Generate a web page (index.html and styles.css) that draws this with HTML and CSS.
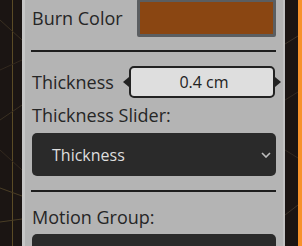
FILE: index.html
```html
<!DOCTYPE html>
<html>
<head>
<meta charset="utf-8">
<link rel="stylesheet" href="styles.css">
</head>
<body>
<div class="app">
  <svg class="scene" width="302" height="246" viewBox="0 0 302 246">
    <line x1="12.5" y1="0" x2="12.5" y2="246" stroke="#5a4b26" stroke-width="1"/>
    <line x1="0" y1="20" x2="22" y2="40" stroke="#3a3022" stroke-width="1"/>
    <line x1="0" y1="70" x2="22" y2="60" stroke="#33291f" stroke-width="1"/>
    <line x1="0" y1="120" x2="22" y2="105" stroke="#3a3022" stroke-width="1"/>
    <line x1="0" y1="150" x2="22" y2="170" stroke="#33291f" stroke-width="1"/>
    <line x1="0" y1="188" x2="22" y2="196" stroke="#4a3e26" stroke-width="1"/>
    <line x1="0" y1="222" x2="22" y2="219" stroke="#4a3e26" stroke-width="1"/>
    <line x1="285" y1="44" x2="298" y2="36" stroke="#3e342a" stroke-width="1"/>
    <line x1="285" y1="100" x2="298" y2="92" stroke="#332a22" stroke-width="1"/>
    <line x1="285" y1="150" x2="298" y2="158" stroke="#332a22" stroke-width="1"/>
    <line x1="285" y1="215" x2="298" y2="205" stroke="#3e342a" stroke-width="1"/>
  </svg>
  <div class="side-left"></div>
  <div class="panel">
    <div class="row color-row">
      <span class="label">Burn Color</span>
      <div class="swatch"></div>
    </div>
    <div class="rule"></div>
    <div class="row thick-row">
      <span class="label">Thickness</span>
      <div class="spin">
        <span class="nub nub-left"></span>
        <span class="spin-value">0.4 cm</span>
        <span class="nub nub-right"></span>
      </div>
    </div>
    <div class="label block-label">Thickness Slider:</div>
    <div class="select">
      <span>Thickness</span>
      <svg class="chev" width="10" height="6" viewBox="0 0 10 6"><path d="M1 1 L5 5 L9 1" fill="none" stroke="#bdbdbd" stroke-width="1.6"/></svg>
    </div>
    <div class="rule rule2"></div>
    <div class="label block-label motion">Motion Group:</div>
    <div class="select"></div>
  </div>
  <div class="side-right"></div>
  <div class="accent"></div>
</div>
</body>
</html>
```
FILE: styles.css
```css
html, body {
  margin: 0;
  padding: 0;
}
body {
  width: 302px;
  height: 246px;
  overflow: hidden;
  background: #1b1513;
  font-family: "Open Sans", "Noto Sans", sans-serif;
}
.app {
  position: relative;
  display: flex;
  height: 246px;
}
.scene {
  position: absolute;
  left: 0;
  top: 0;
}
.side-left {
  width: 22px;
  flex: none;
}
.panel {
  position: relative;
  flex: none;
  background: #b4b4b4;
  border-left: 3px solid #c6c6c6;
  border-right: 2px solid #c2c2c2;
  padding: 0 7px 0 6px;
  box-sizing: border-box;
  width: 263px;
  overflow: hidden;
}
.side-right {
  width: 13px;
  flex: none;
}
.accent {
  width: 4px;
  flex: none;
  background: #f7922a;
}
.label {
  font-size: 18px;
  line-height: 24px;
  color: #262626;
  padding-left: 1px;
  white-space: nowrap;
}
.row {
  display: flex;
  align-items: center;
  justify-content: space-between;
}
.color-row {
  height: 38px;
  margin-top: -1px;
}
.swatch {
  width: 139px;
  height: 38px;
  box-sizing: border-box;
  border: 3px solid #5b5e61;
  border-radius: 2px;
  background: #8a4612;
}
.rule {
  height: 2px;
  background: #1e1e1e;
  margin-top: 13px;
}
.thick-row {
  margin-top: 14px;
  height: 32px;
}
.spin {
  position: relative;
  width: 146px;
  height: 32px;
  margin-right: 1px;
  box-sizing: border-box;
  border: 2px solid #222;
  border-radius: 5px;
  background: #dedede;
  display: flex;
  align-items: center;
  justify-content: center;
}
.spin-value {
  font-size: 16px;
  color: #222;
  padding-left: 4px;
}
.nub {
  position: absolute;
  top: 50%;
  width: 0;
  height: 0;
  border-top: 5px solid transparent;
  border-bottom: 5px solid transparent;
  margin-top: -5px;
}
.nub-left {
  left: -8px;
  border-right: 6px solid #222;
}
.nub-right {
  right: -8px;
  border-left: 6px solid #222;
}
.block-label {
  margin-top: 5px;
}
.select {
  margin-top: 6px;
  margin-left: 1px;
  height: 43px;
  box-sizing: border-box;
  background: #2a2a2a;
  border-radius: 5px;
  display: flex;
  align-items: center;
  justify-content: space-between;
  padding: 0 5px 0 20px;
  color: #dedede;
  font-size: 16px;
}
.chev {
  margin-top: 1px;
}
.rule2 {
  margin-top: 14px;
}
.motion {
  margin-top: 13px;
}
.motion + .select {
  margin-top: 5px;
}
```
